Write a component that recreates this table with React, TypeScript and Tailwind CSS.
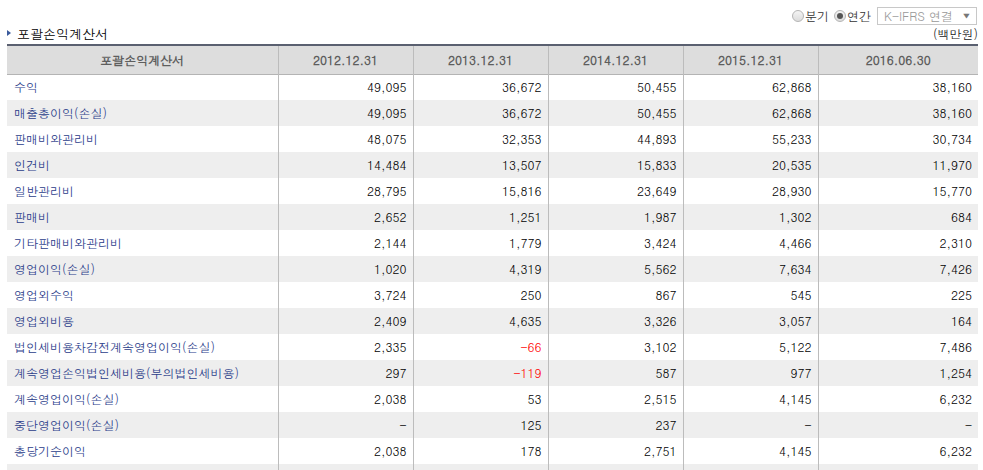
import React from 'react';

const years = ['2012.12.31', '2013.12.31', '2014.12.31', '2015.12.31', '2016.06.30'];

const rows: [string, string[]][] = [
  ['수익', ['49,095', '36,672', '50,455', '62,868', '38,160']],
  ['매출총이익(손실)', ['49,095', '36,672', '50,455', '62,868', '38,160']],
  ['판매비와관리비', ['48,075', '32,353', '44,893', '55,233', '30,734']],
  ['인건비', ['14,484', '13,507', '15,833', '20,535', '11,970']],
  ['일반관리비', ['28,795', '15,816', '23,649', '28,930', '15,770']],
  ['판매비', ['2,652', '1,251', '1,987', '1,302', '684']],
  ['기타판매비와관리비', ['2,144', '1,779', '3,424', '4,466', '2,310']],
  ['영업이익(손실)', ['1,020', '4,319', '5,562', '7,634', '7,426']],
  ['영업외수익', ['3,724', '250', '867', '545', '225']],
  ['영업외비용', ['2,409', '4,635', '3,326', '3,057', '164']],
  ['법인세비용차감전계속영업이익(손실)', ['2,335', '-66', '3,102', '5,122', '7,486']],
  ['계속영업손익법인세비용(부의법인세비용)', ['297', '-119', '587', '977', '1,254']],
  ['계속영업이익(손실)', ['2,038', '53', '2,515', '4,145', '6,232']],
  ['중단영업이익(손실)', ['-', '125', '237', '-', '-']],
  ['총당기순이익', ['2,038', '178', '2,751', '4,145', '6,232']],
  ['', ['', '', '', '', '']],
];

const Radio = ({ checked }: { checked?: boolean }) => (
  <span className="w-[12px] h-[12px] rounded-full border border-[#b5b5b5] bg-gradient-to-b from-[#f4f4f4] to-[#dcdcdc] flex items-center justify-center">
    {checked && <span className="w-[6px] h-[6px] rounded-full bg-[#555]" />}
  </span>
);

const IncomeStatement = () => {
  return (
    <div className="w-[983px] h-[470px] overflow-hidden bg-white text-[12px] text-black font-['Dotum','Noto_Sans_CJK_KR',sans-serif]">
      {/* 상단 옵션 */}
      <div className="flex justify-end items-center pt-[7px] pr-[6px] h-[25px] gap-[3px]">
        <label className="flex items-center gap-[1px] text-[#333]"><Radio />분기</label>
        <label className="flex items-center gap-[1px] text-[#333] ml-[2px]"><Radio checked />연간</label>
        <div className="ml-[3px] w-[100px] h-[18px] border border-[#c8c8c8] flex items-center justify-between px-[6px] text-[#999] text-[12px]">
          <span>K-IFRS 연결</span>
          <span className="text-[8px] text-[#777]">▼</span>
        </div>
      </div>

      {/* 제목 */}
      <div className="flex justify-between items-end pl-[7px] pr-[5px] h-[19px] pb-[1px]">
        <div className="flex items-center gap-[6px]">
          <span className="w-0 h-0 border-y-[3px] border-y-transparent border-l-[4px] border-l-[#3a5a9c]" />
          <span className="text-[13px]">포괄손익계산서</span>
        </div>
        <span className="text-[#222]">(백만원)</span>
      </div>

      {/* 표 */}
      <table className="ml-[7px] w-[971px] border-collapse table-fixed">
        <colgroup>
          <col className="w-[271px]" />
          <col className="w-[135px]" />
          <col className="w-[135px]" />
          <col className="w-[135px]" />
          <col className="w-[135px]" />
          <col className="w-[160px]" />
        </colgroup>
        <thead>
          <tr className="h-[29px] bg-[#dddddd] border-t-2 border-t-[#5a6070] border-b border-b-[#b4b4b4]">
            <th className="font-bold text-[#5e5e5e] text-center border-r border-[#bcbcbc]">포괄손익계산서</th>
            {years.map((y, i) => (
              <th key={y} className={`font-bold text-[#5e5e5e] text-center ${i < 4 ? 'border-r border-[#bcbcbc]' : ''}`}>{y}</th>
            ))}
          </tr>
        </thead>
        <tbody>
          {rows.map(([label, vals], r) => (
            <tr key={r} className={`h-[26px] ${r % 2 === 1 ? 'bg-[#eeeeee]' : 'bg-white'}`}>
              <td className="pl-[7px] text-[#2b3d8a] border-r border-[#bcbcbc] whitespace-nowrap">{label}</td>
              {vals.map((v, i) => (
                <td
                  key={i}
                  className={`text-right pr-[6px] ${v.startsWith('-') && v.length > 1 ? 'text-[#ff0000]' : 'text-black'} ${i < 4 ? 'border-r border-[#bcbcbc]' : ''}`}
                >
                  {v}
                </td>
              ))}
            </tr>
          ))}
        </tbody>
      </table>
    </div>
  );
};

export default IncomeStatement;
